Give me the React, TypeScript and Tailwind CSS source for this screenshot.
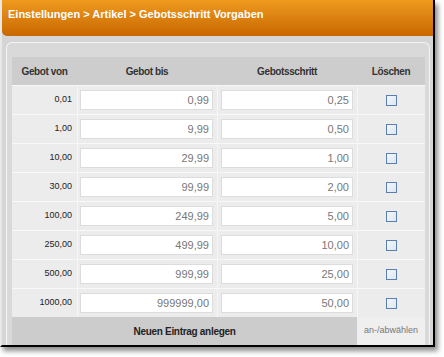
import React from "react";

const rows: [string, string, string][] = [
  ["0,01", "0,99", "0,25"],
  ["1,00", "9,99", "0,50"],
  ["10,00", "29,99", "1,00"],
  ["30,00", "99,99", "2,00"],
  ["100,00", "249,99", "5,00"],
  ["250,00", "499,99", "10,00"],
  ["500,00", "999,99", "25,00"],
  ["1000,00", "999999,00", "50,00"],
];

export default function App() {
  return (
    <div className="w-[444px] h-[357px] bg-white" style={{ fontFamily: '"Liberation Sans", Arial, sans-serif' }}>
      <div className="w-[435px] h-[347px] border-r-2 border-b-2 border-black bg-[#d5d5d5] flex flex-col shadow-[3px_4px_5px_rgba(0,0,0,0.45)] border-l-2 border-l-[#e8e8e8]">
        <div className="h-[36px] bg-gradient-to-b from-[#ee9a1e] to-[#c96700] rounded-bl-[5px] px-[6px] pt-[6px] text-white font-bold text-[11px]">
          Einstellungen &gt; Artikel &gt; Gebotsschritt Vorgaben
        </div>
        <div className="flex-1 pl-[4px] pr-[3px] pt-[6px]">
          <div className="h-full border border-b-0 border-[#f4f4f4] rounded-t-[6px] bg-[#d9d9d9] pt-[14px] pl-[5px] pr-[3px]">
            <div className="grid grid-cols-[65px_140px_140px_68px] text-[#222]">
              <div className="h-[28px] bg-[#cdcdcd] flex items-center justify-center font-bold text-[10px] tracking-[-0.4px] text-[#333]">Gebot von</div>
              <div className="h-[28px] bg-[#cdcdcd] flex items-center justify-center font-bold text-[10px] tracking-[-0.4px] text-[#333]">Gebot bis</div>
              <div className="h-[28px] bg-[#cdcdcd] flex items-center justify-center font-bold text-[10px] tracking-[-0.4px] text-[#333]">Gebotsschritt</div>
              <div className="h-[28px] bg-[#cdcdcd] flex items-center justify-center font-bold text-[10px] tracking-[-0.4px] text-[#333]">Löschen</div>
              {rows.map((r, i) => (
                <React.Fragment key={i}>
                  <div className="h-[29px] bg-[#ececec] border-t border-[#f8f8f8] flex items-center justify-end pr-[5px] text-[9px] text-[#222]">{r[0]}</div>
                  <div className="h-[29px] bg-[#ececec] border-t border-[#f8f8f8] border-l border-l-[#f6f6f6] flex items-center pl-[2px] pr-[4px]">
                    <div className="w-full h-[20px] bg-white border border-[#dcdcdc] flex items-center justify-end pr-[3px] text-[11px] text-[#777]">{r[1]}</div>
                  </div>
                  <div className="h-[29px] bg-[#ececec] border-t border-[#f8f8f8] border-l border-l-[#f6f6f6] flex items-center pl-[3px] pr-[4px]">
                    <div className="w-full h-[20px] bg-white border border-[#dcdcdc] flex items-center justify-end pr-[3px] text-[11px] text-[#777]">{r[2]}</div>
                  </div>
                  <div className="h-[29px] bg-[#ececec] border-t border-[#f8f8f8] border-l border-l-[#f6f6f6] flex items-center justify-center">
                    <div className="w-[11px] h-[11px] border border-[#5b80b0] bg-gradient-to-br from-[#f4f7fb] to-[#dde6f0]" />
                  </div>
                </React.Fragment>
              ))}
              <div className="col-span-3 h-[28px] bg-[#cccccc] flex items-center justify-center font-bold text-[10px] tracking-[-0.3px] text-[#222]">Neuen Eintrag anlegen</div>
              <div className="h-[28px] bg-[#efefef] flex items-center justify-center text-[9px] text-[#777]">an-/abwählen</div>
            </div>
          </div>
        </div>
      </div>
    </div>
  );
}
